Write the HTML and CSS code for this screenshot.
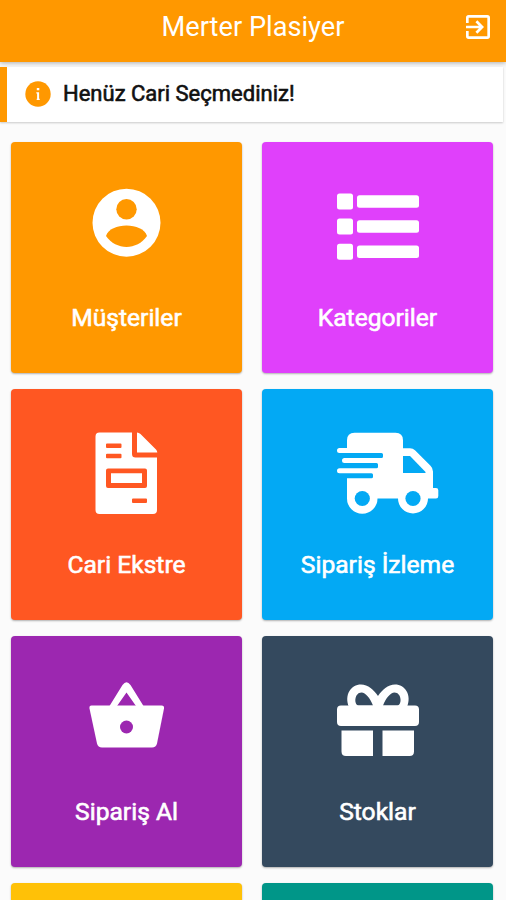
FILE: index.html
```html
<!DOCTYPE html>
<html lang="tr">
<head>
<meta charset="utf-8">
<title>Merter Plasiyer</title>
<link rel="stylesheet" href="styles.css">
</head>
<body>
<header class="bar">
  <h1 class="title">Merter Plasiyer</h1>
  <svg class="exit" viewBox="3 3 18 18" fill="#fff"><path d="M10.09 15.59 11.5 17l5-5-5-5-1.41 1.41L12.67 11H3v2h9.67zM19 3H5a2 2 0 0 0-2 2v4h2V5h14v14H5v-4H3v4a2 2 0 0 0 2 2h14a2 2 0 0 0 2-2V5a2 2 0 0 0-2-2z"/></svg>
</header>
<section class="notice">
  <svg class="info" viewBox="0 0 26 26"><circle cx="13" cy="13" r="12.7" fill="#ff9800"/><path fill="#fff" d="M11.8 7h2.500v2.300h-2.500zM11.300 11.200h2.800v6.500h.6v1.300h-3v-1.300h.4v-5.200h-.8z"/></svg>
  <span>Henüz Cari Seçmediniz!</span>
</section>
<main class="grid">
  <a class="card orange">
    <svg class="icon" viewBox="71 175 111 96"><circle cx="126.5" cy="222.7" r="34" fill="#fff"/><g fill="#ff9800"><circle cx="126.5" cy="209.3" r="10.2"/><path d="M106 236C110 222 143 222 147 236C137 250.500 116 250.500 106 236z"/></g></svg>
    <span class="label">Müşteriler</span>
  </a>
  <a class="card pink">
    <svg class="icon" viewBox="322 175 111 96" fill="#fff"><rect x="337" y="193.500" width="16" height="16" rx="2.500"/><rect x="337" y="218.500" width="16" height="16" rx="2.500"/><rect x="337" y="243.700" width="16" height="16" rx="2.500"/><rect x="357" y="195.200" width="62" height="12.600" rx="2.500"/><rect x="357" y="220.200" width="62" height="12.600" rx="2.500"/><rect x="357" y="245.500" width="62" height="12.600" rx="2.500"/></svg>
    <span class="label">Kategoriler</span>
  </a>
  <a class="card red">
    <svg class="icon" viewBox="71 422 111 96" fill="#fff"><path fill-rule="evenodd" d="M99.500 432.500H132V454q0 3.500 3.500 3.500H157V510q0 4-4 4H99.500q-4 0-4-4V436.500q0-4 4-4zM107 443.500q-1 0-1 1V447q0 1 1 1h13.500q1 0 1-1v-2.500q0-1-1-1zM107 453.700q-1 0-1 1v2.500q0 1 1 1h13.500q1 0 1-1v-2.500q0-1-1-1zM108 468.500q-2 0-2 2V486q0 2 2 2h37q2 0 2-2v-15.500q0-2-2-2zM111 473.300h31v9.700H111zM133 498.500q-1 0-1 1v2.500q0 1 1 1h13q1 0 1-1v-2.500q0-1-1-1z"/><path d="M137 432.500q2 0 3.500 1.500L156 449.500q1.300 1.300 1.300 3H137z"/></svg>
    <span class="label">Cari Ekstre</span>
  </a>
  <a class="card blue">
    <svg class="icon wide" viewBox="322 422 120 96"><path fill="#fff" d="M354.500 432.700H395.500Q403 432.700 403 440.200V448.300H410Q413 448.300 415 450.300L430.500 465.800Q433 468.300 433 471.500V488H436Q438.300 488 438.300 490.300V496Q438.300 498.500 436 498.500H428A15 15 0 1 1 398 498.500H377.500A15.200 15.200 0 1 1 347 498.500V478.200H371.500Q373 478.200 373 476.700V474.700Q373 473.200 371.500 473.200H339.500Q337 473.200 337 470.700Q337 468.200 339.500 468.200H376.500Q378 468.200 378 466.700V464.500Q378 463 376.500 463H344.500Q342 463 342 460.500Q342 458 344.500 458H381.500Q383 458 383 456.500V454.500Q383 453 381.500 453H339.500Q337 453 337 450.500Q337 448 339.500 448H347V440.200Q347 432.700 354.500 432.700z"/><g fill="#03a9f4"><circle cx="362.300" cy="498.500" r="7.600"/><circle cx="413" cy="498.500" r="7.600"/><path d="M403 456h7l15.500 16v1H403z"/></g></svg>
    <span class="label">Sipariş İzleme</span>
  </a>
  <a class="card purple">
    <svg class="icon" viewBox="71 669 111 96"><path fill-rule="evenodd" d="M109.500 706 122.500 685Q126.500 679.500 130.500 685L143.500 706zM117 706H136L126.500 692.500z" fill="#fff"/><path d="M91.500 705.500H161.500Q164.500 705.500 164 708.500L157 743.500Q156 747.500 152 747.500H102Q98 747.500 97 743.500L89.500 708.500Q89 705.500 91.500 705.500z" fill="#fff"/><circle cx="126.500" cy="727" r="6.500" fill="#9c27b0"/></svg>
    <span class="label">Sipariş Al</span>
  </a>
  <a class="card slate">
    <svg class="icon" viewBox="322 669 111 96"><path fill="#fff" d="M349 707C344 695 351 684.500 361 684.500C368 684.500 374 690 378 696C382 690 388 684.500 395 684.500C405 684.500 412 695 407 707z"/><path fill="#34495e" d="M358.500 705.500C353.500 704.500 354.500 692.500 361.500 692.500C365.500 692.500 370 698 373 705.500zM397.500 705.500C402.500 704.500 401.500 692.500 394.500 692.500C390.500 692.500 386 698 383 705.500z"/><path fill="#fff" d="M341 705.500H415Q419 705.500 419 709.500V722Q419 726 415 726H341Q337 726 337 722V709.500Q337 705.500 341 705.500zM341.500 730.500H373V756H346Q341.500 756 341.500 751.500zM382.500 730.500H414V751.500Q414 756 409.500 756H382.500z"/></svg>
    <span class="label">Stoklar</span>
  </a>
  <a class="card cut yellow"></a>
  <a class="card cut teal"></a>
</main>
</body>
</html>
```
FILE: styles.css
```css
* { box-sizing: border-box; }
body {
  margin: 0;
  height: 900px;
  overflow: hidden;
  background: #fbfbfb;
  font-family: Roboto, "Liberation Sans", sans-serif;
}
.bar {
  display: grid;
  grid-template-columns: 1fr auto 1fr;
  height: 62px;
  padding: 0 16px 8px;
  align-items: center;
  background: #ff9800;
  box-shadow: 0 1px 5px rgba(0, 0, 0, .32);
}
.title {
  grid-column: 2;
  margin: 0;
  color: #fff;
  font-size: 27.2px;
  font-weight: 400;
  line-height: 30px;
  white-space: nowrap;
}
.exit { width: 24px; height: 24px; justify-self: end; }
.notice {
  display: flex;
  align-items: center;
  gap: 12px;
  height: 55px;
  margin: 5px 3px 0 0;
  padding: 0 0 2px 18px;
  border-left: 7px solid #ff9800;
  background: #fff;
  box-shadow: 0 1px 2px rgba(0, 0, 0, .2);
  color: #111;
  font-size: 22px;
  -webkit-text-stroke: .6px #111;
}
.info { width: 26px; height: 26px; }
.grid {
  display: grid;
  grid-template-columns: 231px 231px;
  grid-template-rows: repeat(3, 230.5px) 17px;
  gap: 16.5px 20px;
  padding: 20px 11px 0;
}
.card {
  display: flex;
  flex-direction: column;
  align-items: center;
  padding-top: 33px;
  border-radius: 4px;
  box-shadow: 0 1px 2px rgba(0, 0, 0, .3);
}
.card.cut { padding: 0; border-radius: 4px 4px 0 0; }
.icon { width: 111px; height: 96px; }
.icon.wide { width: 120px; margin-left: 9px; }
.label {
  margin-top: 32px;
  color: #fff;
  font-size: 24.6px;
  line-height: 30px;
  -webkit-text-stroke: .6px #fff;
}
.orange { background: #ff9800; }
.pink { background: #e040fb; }
.red { background: #ff5722; }
.blue { background: #03a9f4; }
.purple { background: #9c27b0; }
.slate { background: #34495e; }
.yellow { background: #ffc107; }
.teal { background: #009688; }
```
